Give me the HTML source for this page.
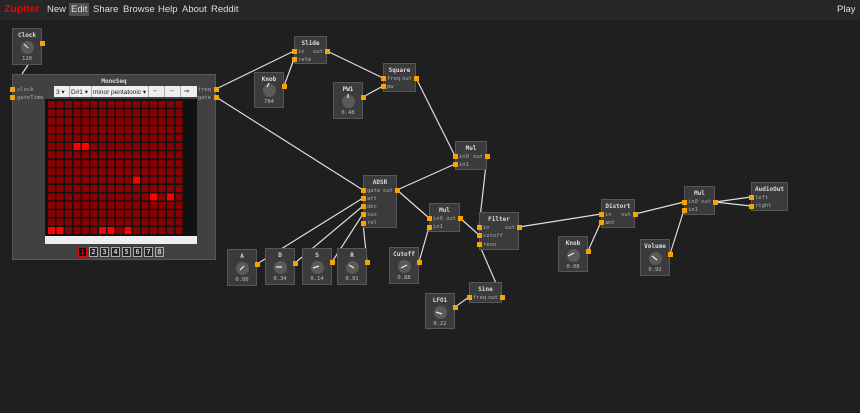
<!DOCTYPE html>
<html><head><meta charset="utf-8"><style>
*{margin:0;padding:0;box-sizing:border-box}
body{width:860px;height:413px;background:#1f1f1f;overflow:hidden;position:relative;font-family:"DejaVu Sans Mono","Liberation Mono",monospace;color:#ccc}
#bar{position:absolute;left:0;top:0;width:860px;height:20px;background:#272727;font-family:"Liberation Sans",sans-serif;font-size:9.5px;color:#ddd}
#bar span{position:absolute;top:4px}
#bar .logo{color:#e00;font-weight:bold;font-size:10.5px;left:4px;top:3px}
#bar .sel{background:#505050;padding:1px 2px;top:3px}
.n{position:absolute;background:#3b3b3b;border:1px solid #575757;font-size:5.5px}
.t{position:absolute;left:0;right:0;top:3px;text-align:center;font-weight:bold;font-size:6px;color:#ddd}
.v{position:absolute;left:0;right:0;text-align:center;color:#bbb;font-size:5.5px}
.k{position:absolute;width:13px;height:13px;border-radius:50%;background:#5a5a5a}
.l{position:absolute;color:#aaa}
.p{position:absolute;width:5px;height:5px;background:#f5a500}
</style></head><body>
<div id="bar"><span class="logo">Zupiter</span><span style="left:47px">New</span><span class="sel" style="left:69px">Edit</span><span style="left:93px">Share</span><span style="left:123px">Browse</span><span style="left:158px">Help</span><span style="left:182px">About</span><span style="left:211px">Reddit</span><span style="left:837px">Play</span></div>
<svg width="860" height="413" style="position:absolute;left:0;top:0" stroke="#ddd" stroke-width="1.2" fill="none">
<line x1="28" y1="65" x2="22" y2="74"/>
<line x1="216" y1="89" x2="294" y2="51"/>
<line x1="216" y1="97" x2="363" y2="190"/>
<line x1="284" y1="86" x2="294" y2="59"/>
<line x1="327" y1="51" x2="383" y2="78"/>
<line x1="363" y1="97" x2="383" y2="86"/>
<line x1="416" y1="78" x2="455" y2="156"/>
<line x1="397" y1="190" x2="455" y2="164"/>
<line x1="397" y1="190" x2="429" y2="218"/>
<line x1="487" y1="156" x2="479" y2="227"/>
<line x1="460" y1="218" x2="479" y2="235"/>
<line x1="419" y1="262" x2="429" y2="227"/>
<line x1="257" y1="264" x2="363" y2="198"/>
<line x1="295" y1="263" x2="363" y2="206"/>
<line x1="332" y1="262" x2="363" y2="214"/>
<line x1="367" y1="262" x2="363" y2="223"/>
<line x1="502" y1="297" x2="479" y2="244"/>
<line x1="455" y1="307" x2="469" y2="297"/>
<line x1="519" y1="227" x2="601" y2="214"/>
<line x1="588" y1="251" x2="601" y2="222"/>
<line x1="635" y1="214" x2="684" y2="202"/>
<line x1="670" y1="254" x2="684" y2="210"/>
<line x1="715" y1="202" x2="751" y2="197"/>
<line x1="715" y1="202" x2="751" y2="206"/>
</svg>

<!-- Clock -->
<div class="n" style="left:12px;top:28px;width:30px;height:37px"><div class="t">Clock</div><div class="k" style="left:8px;top:12px"></div><div class="v" style="top:27px">120</div></div>
<svg style="position:absolute;left:0;top:0" width="860" height="413"><line x1="24" y1="44" x2="28" y2="48" stroke="#ddd" stroke-width="1.2"/></svg>

<!-- MonoSeq -->
<div class="n" style="left:12px;top:74px;width:204px;height:186px;background:#414141">
<div class="t">MonoSeq</div>
<div class="l" style="left:4px;top:12px">clock</div><div class="l" style="left:4px;top:20px">gateTime</div>
<div class="l" style="right:4px;top:12px">freq</div><div class="l" style="right:4px;top:20px">gate</div>
</div>
<div style="position:absolute;left:54px;top:86px;width:143px;height:11px;background:#eee;font-family:'Liberation Sans',sans-serif;font-size:6.5px;color:#222">
<span style="position:absolute;left:2px;top:2px">3 ▾</span>
<span style="position:absolute;left:15px;top:0;width:1px;height:11px;background:#aaa"></span>
<span style="position:absolute;left:17px;top:2px">D#1 ▾</span>
<span style="position:absolute;left:37px;top:0;width:1px;height:11px;background:#aaa"></span>
<span style="position:absolute;left:39px;top:2px">minor pentatonic ▾</span>
<span style="position:absolute;left:94px;top:0;width:1px;height:11px;background:#aaa"></span>
<span style="position:absolute;left:98px;top:1px">←</span>
<span style="position:absolute;left:110px;top:0;width:1px;height:11px;background:#aaa"></span>
<span style="position:absolute;left:114px;top:1px">→</span>
<span style="position:absolute;left:126px;top:0;width:1px;height:11px;background:#aaa"></span>
<span style="position:absolute;left:130px;top:1px">⇒</span>
</div>
<svg style="position:absolute;left:45px;top:99px" width="152" height="137">
<defs><pattern id="c" x="3" y="2" width="8.5" height="8.4" patternUnits="userSpaceOnUse"><rect width="7" height="7" fill="#8b0000"/></pattern></defs>
<rect width="152" height="137" fill="#111"/>
<rect x="3" y="2" width="136" height="134" fill="url(#c)"/>
<g fill="#f00">
<rect x="28.5" y="44" width="7" height="7"/><rect x="37" y="44" width="7" height="7"/>
<rect x="88" y="77.6" width="7" height="7"/>
<rect x="105" y="94.4" width="7" height="7"/><rect x="122" y="94.4" width="7" height="7"/>
<rect x="3" y="128" width="7" height="7"/><rect x="11.5" y="128" width="7" height="7"/>
<rect x="54" y="128" width="7" height="7"/><rect x="62.5" y="128" width="7" height="7"/>
<rect x="79.5" y="128" width="7" height="7"/>
</g></svg>
<div style="position:absolute;left:45px;top:236px;width:152px;height:8px;background:#eee"></div>
<div style="position:absolute;left:78px;top:247px;font-size:7px;font-weight:bold">
<span style="position:absolute;left:0;width:9px;height:10px;border:1px solid #e00;background:#111;color:#e00;text-align:center">1</span>
<span style="position:absolute;left:11px;width:9px;height:10px;border:1px solid #aaa;background:#222;text-align:center">2</span>
<span style="position:absolute;left:22px;width:9px;height:10px;border:1px solid #aaa;background:#222;text-align:center">3</span>
<span style="position:absolute;left:33px;width:9px;height:10px;border:1px solid #aaa;background:#222;text-align:center">4</span>
<span style="position:absolute;left:44px;width:9px;height:10px;border:1px solid #aaa;background:#222;text-align:center">5</span>
<span style="position:absolute;left:55px;width:9px;height:10px;border:1px solid #aaa;background:#222;text-align:center">6</span>
<span style="position:absolute;left:66px;width:9px;height:10px;border:1px solid #aaa;background:#222;text-align:center">7</span>
<span style="position:absolute;left:77px;width:9px;height:10px;border:1px solid #aaa;background:#444;text-align:center">8</span>
</div>

<!-- module nodes -->
<div class="n" style="left:294px;top:36px;width:33px;height:28px"><div class="t">Slide</div><div class="l" style="left:3px;top:12px">in</div><div class="l" style="right:3px;top:12px">out</div><div class="l" style="left:3px;top:20px">rate</div></div>
<div class="n" style="left:383px;top:63px;width:33px;height:29px"><div class="t">Square</div><div class="l" style="left:3px;top:12px">freq</div><div class="l" style="right:3px;top:12px">out</div><div class="l" style="left:3px;top:20px">pw</div></div>
<div class="n" style="left:455px;top:141px;width:32px;height:29px"><div class="t">Mul</div><div class="l" style="left:3px;top:12px">in0</div><div class="l" style="right:3px;top:12px">out</div><div class="l" style="left:3px;top:20px">in1</div></div>
<div class="n" style="left:363px;top:175px;width:34px;height:53px"><div class="t">ADSR</div><div class="l" style="left:3px;top:12px">gate</div><div class="l" style="right:3px;top:12px">out</div><div class="l" style="left:3px;top:20px">att</div><div class="l" style="left:3px;top:28px">dec</div><div class="l" style="left:3px;top:36px">sus</div><div class="l" style="left:3px;top:44px">rel</div></div>
<div class="n" style="left:429px;top:203px;width:31px;height:29px"><div class="t">Mul</div><div class="l" style="left:3px;top:12px">in0</div><div class="l" style="right:3px;top:12px">out</div><div class="l" style="left:3px;top:20px">in1</div></div>
<div class="n" style="left:479px;top:212px;width:40px;height:38px"><div class="t">Filter</div><div class="l" style="left:3px;top:12px">in</div><div class="l" style="right:3px;top:12px">out</div><div class="l" style="left:3px;top:20px">cutoff</div><div class="l" style="left:3px;top:29px">reso</div></div>
<div class="n" style="left:469px;top:282px;width:33px;height:21px"><div class="t">Sine</div><div class="l" style="left:3px;top:12px">freq</div><div class="l" style="right:3px;top:12px">out</div></div>
<div class="n" style="left:601px;top:199px;width:34px;height:29px"><div class="t">Distort</div><div class="l" style="left:3px;top:12px">in</div><div class="l" style="right:3px;top:12px">out</div><div class="l" style="left:3px;top:20px">amt</div></div>
<div class="n" style="left:684px;top:186px;width:31px;height:29px"><div class="t">Mul</div><div class="l" style="left:3px;top:12px">in0</div><div class="l" style="right:3px;top:12px">out</div><div class="l" style="left:3px;top:20px">in1</div></div>
<div class="n" style="left:751px;top:182px;width:37px;height:29px"><div class="t">AudioOut</div><div class="l" style="left:3px;top:12px">left</div><div class="l" style="left:3px;top:20px">right</div></div>

<!-- knob nodes -->
<div class="n" style="left:254px;top:72px;width:30px;height:36px"><div class="t">Knob</div><div class="k" style="left:8px;top:11px"></div><div class="v" style="top:26px">784</div></div>
<div class="n" style="left:333px;top:82px;width:30px;height:37px"><div class="t">PW1</div><div class="k" style="left:8px;top:12px"></div><div class="v" style="top:27px">0.48</div></div>
<div class="n" style="left:227px;top:249px;width:30px;height:37px"><div class="t">A</div><div class="k" style="left:8px;top:12px"></div><div class="v" style="top:27px">0.00</div></div>
<div class="n" style="left:265px;top:248px;width:30px;height:37px"><div class="t">D</div><div class="k" style="left:8px;top:12px"></div><div class="v" style="top:27px">0.34</div></div>
<div class="n" style="left:302px;top:248px;width:30px;height:37px"><div class="t">S</div><div class="k" style="left:8px;top:12px"></div><div class="v" style="top:27px">0.14</div></div>
<div class="n" style="left:337px;top:248px;width:30px;height:37px"><div class="t">R</div><div class="k" style="left:8px;top:12px"></div><div class="v" style="top:27px">0.91</div></div>
<div class="n" style="left:389px;top:247px;width:30px;height:37px"><div class="t">Cutoff</div><div class="k" style="left:8px;top:12px"></div><div class="v" style="top:27px">0.88</div></div>
<div class="n" style="left:425px;top:293px;width:30px;height:36px"><div class="t">LFO1</div><div class="k" style="left:8px;top:12px"></div><div class="v" style="top:27px">0.22</div></div>
<div class="n" style="left:558px;top:236px;width:30px;height:36px"><div class="t">Knob</div><div class="k" style="left:8px;top:12px"></div><div class="v" style="top:27px">0.08</div></div>
<div class="n" style="left:640px;top:239px;width:30px;height:37px"><div class="t">Volume</div><div class="k" style="left:8px;top:12px"></div><div class="v" style="top:27px">0.92</div></div>

<!-- knob indicators -->
<svg style="position:absolute;left:0;top:0" width="860" height="413" stroke="#eee" stroke-width="1.2">
<line x1="267" y1="87" x2="269" y2="83"/>
<line x1="348" y1="98" x2="348" y2="94"/>
<line x1="240" y1="270" x2="244" y2="266"/>
<line x1="276" y1="267" x2="282" y2="267"/>
<line x1="313" y1="268" x2="319" y2="266"/>
<line x1="349" y1="265" x2="354" y2="268"/>
<line x1="401" y1="268" x2="407" y2="265"/>
<line x1="436" y1="312" x2="442" y2="314"/>
<line x1="568" y1="256" x2="574" y2="253"/>
<line x1="652" y1="256" x2="657" y2="260"/>
</svg>

<!-- ports -->
<div class="p" style="left:40px;top:41px"></div>
<div class="p" style="left:10px;top:87px"></div><div class="p" style="left:10px;top:95px"></div>
<div class="p" style="left:214px;top:87px"></div><div class="p" style="left:214px;top:95px"></div>
<div class="p" style="left:292px;top:49px"></div><div class="p" style="left:292px;top:57px"></div><div class="p" style="left:325px;top:49px"></div>
<div class="p" style="left:282px;top:84px"></div>
<div class="p" style="left:381px;top:76px"></div><div class="p" style="left:381px;top:84px"></div><div class="p" style="left:414px;top:76px"></div>
<div class="p" style="left:361px;top:95px"></div>
<div class="p" style="left:453px;top:154px"></div><div class="p" style="left:453px;top:162px"></div><div class="p" style="left:485px;top:154px"></div>
<div class="p" style="left:361px;top:188px"></div><div class="p" style="left:361px;top:196px"></div><div class="p" style="left:361px;top:204px"></div><div class="p" style="left:361px;top:212px"></div><div class="p" style="left:361px;top:221px"></div><div class="p" style="left:395px;top:188px"></div>
<div class="p" style="left:427px;top:216px"></div><div class="p" style="left:427px;top:225px"></div><div class="p" style="left:458px;top:216px"></div>
<div class="p" style="left:477px;top:225px"></div><div class="p" style="left:477px;top:233px"></div><div class="p" style="left:477px;top:242px"></div><div class="p" style="left:517px;top:225px"></div>
<div class="p" style="left:255px;top:262px"></div><div class="p" style="left:293px;top:261px"></div><div class="p" style="left:330px;top:260px"></div><div class="p" style="left:365px;top:260px"></div><div class="p" style="left:417px;top:260px"></div>
<div class="p" style="left:467px;top:295px"></div><div class="p" style="left:500px;top:295px"></div><div class="p" style="left:453px;top:305px"></div>
<div class="p" style="left:599px;top:212px"></div><div class="p" style="left:599px;top:220px"></div><div class="p" style="left:633px;top:212px"></div>
<div class="p" style="left:586px;top:249px"></div>
<div class="p" style="left:682px;top:200px"></div><div class="p" style="left:682px;top:208px"></div><div class="p" style="left:713px;top:200px"></div>
<div class="p" style="left:668px;top:252px"></div>
<div class="p" style="left:749px;top:195px"></div><div class="p" style="left:749px;top:204px"></div>
</body></html>
